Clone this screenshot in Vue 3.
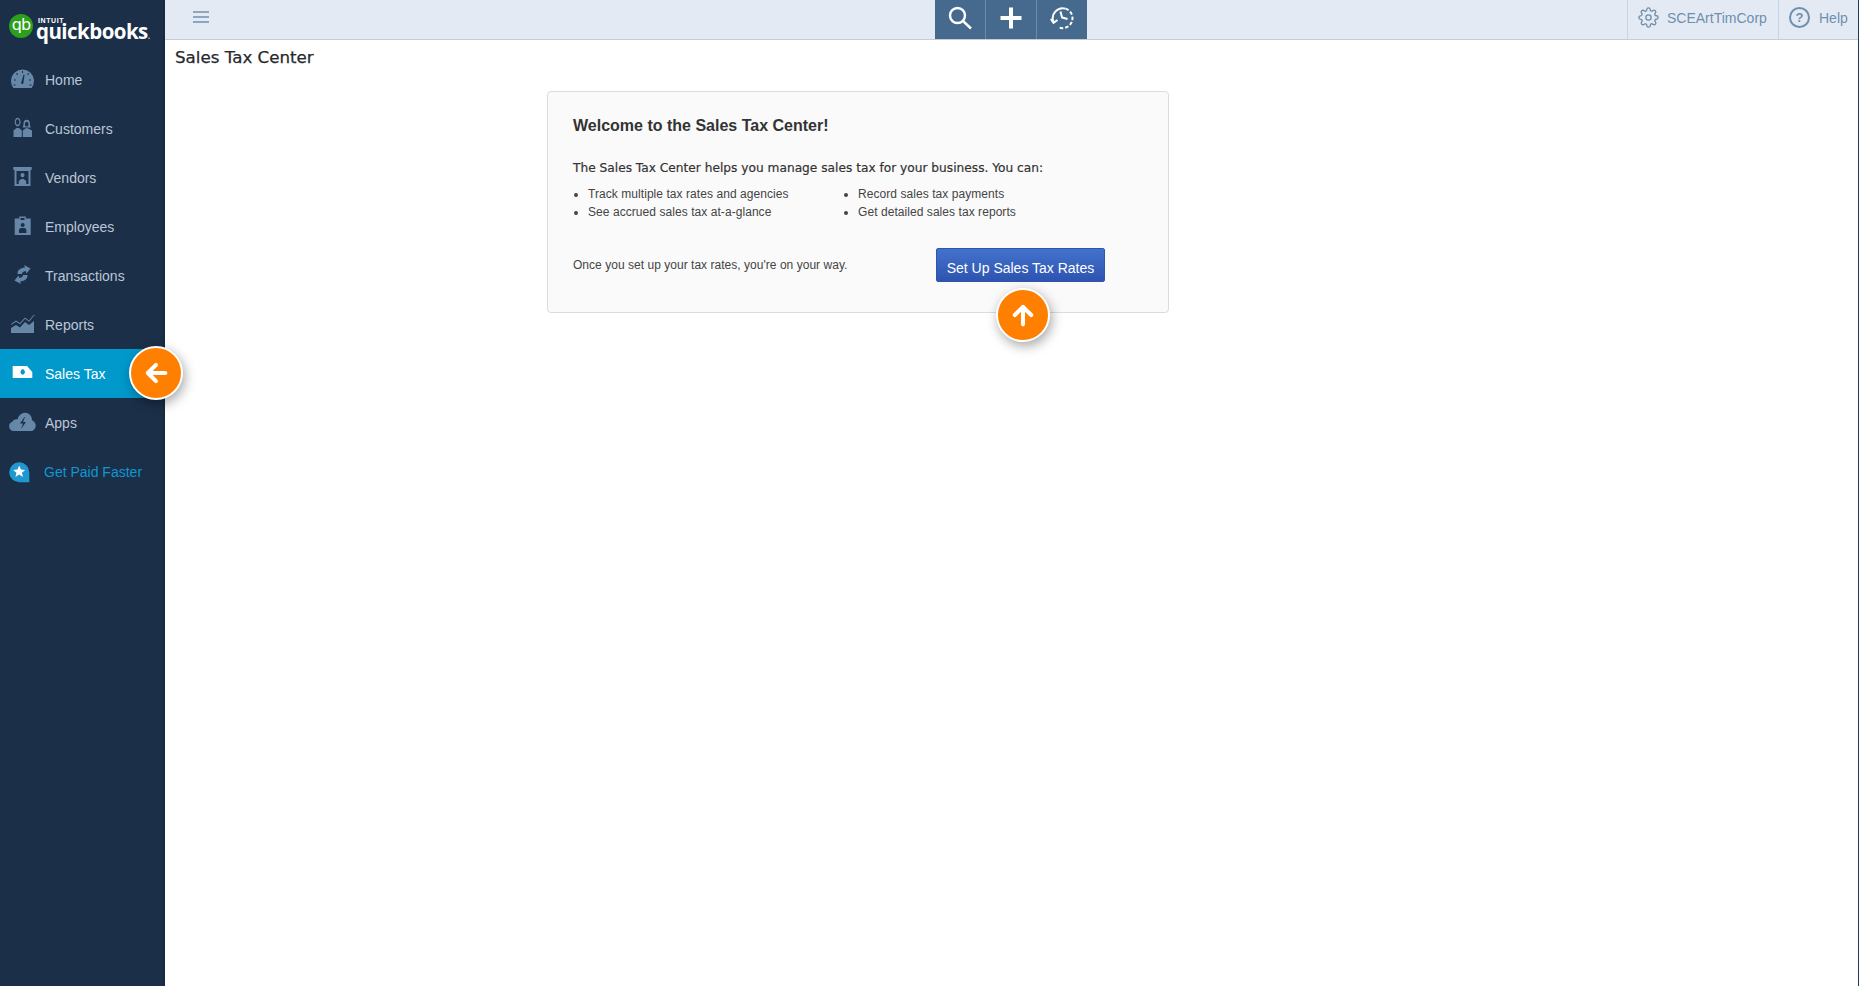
<template>
  <div class="app">
    <aside class="sidebar">
      <div class="logo">
        <span class="logo-mark">qb</span>
        <div class="logo-words">
          <span class="logo-intuit">INTUIT</span>
          <span class="logo-name">quickbooks<i>.</i></span>
        </div>
      </div>
      <nav class="nav">
        <a
          v-for="item in navItems"
          :key="item.label"
          class="nav-item"
          :class="{ active: item.active, promo: item.promo }"
        >
          <svg class="nav-icon" viewBox="0 0 30 24">
            <path :d="item.icon" fill="currentColor" fill-rule="evenodd" />
            <path
              v-if="item.promo"
              d="M11.2 5.6l1.7 4 4.300.3-3.300 2.800 1.100 4.200-3.800-2.300-3.800 2.300 1.100-4.200-3.300-2.800 4.300-.3z"
              fill="#fff"
            />
          </svg>
          <span>{{ item.label }}</span>
          <span v-if="item.active" class="pointer pointer-left">
            <svg viewBox="0 0 24 24" class="pointer-arrow">
              <path d="M20 12H5M12 5l-7 7 7 7" />
            </svg>
          </span>
        </a>
      </nav>
    </aside>

    <div class="main">
      <header class="topbar">
        <div class="top-left">
          <svg class="burger" viewBox="0 0 16 12">
            <path d="M0 1h16M0 6h16M0 11h16" />
          </svg>
        </div>
        <div class="top-actions">
          <button class="action">
            <svg viewBox="0 0 24 24" class="action-icon">
              <circle cx="9.500" cy="9.500" r="7.500" />
              <path d="M15 15L23 22.500" />
            </svg>
          </button>
          <button class="action">
            <svg viewBox="0 0 24 24" class="action-icon thick">
              <path d="M12 1.500v21M1.500 12h21" />
            </svg>
          </button>
          <button class="action">
            <svg viewBox="0 0 24 24" class="action-icon thin">
              <path d="M3.300 15.500A10 10 0 0 1 15.500 2.600" />
              <path d="M15.500 2.600A10 10 0 0 1 9.500 21.700" stroke-dasharray="3.500 2" />
              <path d="M0.800 13L3.500 16.800 7.500 14" />
              <path d="M10.500 5.500l1.500 6 5.500 1.500" />
            </svg>
          </button>
        </div>
        <div class="top-right">
          <div class="top-cell company">
            <svg viewBox="0 0 24 24" class="gear">
              <circle cx="12" cy="12" r="3" />
              <path d="M19.4 15a1.65 1.65 0 0 0 .33 1.82l.06.06a2 2 0 0 1 0 2.83 2 2 0 0 1-2.83 0l-.06-.06a1.65 1.65 0 0 0-1.82-.33 1.65 1.65 0 0 0-1 1.51V21a2 2 0 0 1-2 2 2 2 0 0 1-2-2v-.09A1.65 1.65 0 0 0 9 19.4a1.65 1.65 0 0 0-1.82.33l-.06.06a2 2 0 0 1-2.83 0 2 2 0 0 1 0-2.83l.06-.06a1.65 1.65 0 0 0 .33-1.82 1.65 1.65 0 0 0-1.51-1H3a2 2 0 0 1-2-2 2 2 0 0 1 2-2h.09A1.65 1.65 0 0 0 4.6 9a1.65 1.65 0 0 0-.33-1.82l-.06-.06a2 2 0 0 1 0-2.83 2 2 0 0 1 2.83 0l.06.06a1.65 1.65 0 0 0 1.82.33H9a1.65 1.65 0 0 0 1-1.51V3a2 2 0 0 1 2-2 2 2 0 0 1 2 2v.09a1.65 1.65 0 0 0 1 1.51 1.65 1.65 0 0 0 1.82-.33l.06-.06a2 2 0 0 1 2.83 0 2 2 0 0 1 0 2.83l-.06.06a1.65 1.65 0 0 0-.33 1.82V9a1.65 1.65 0 0 0 1.51 1H21a2 2 0 0 1 2 2 2 2 0 0 1-2 2h-.09a1.65 1.65 0 0 0-1.51 1z" />
            </svg>
            <span>SCEArtTimCorp</span>
          </div>
          <div class="top-cell help">
            <span class="help-icon">?</span>
            <span>Help</span>
          </div>
        </div>
      </header>

      <div class="content">
        <h1 class="page-title">Sales Tax Center</h1>
        <section class="welcome">
          <h2>Welcome to the Sales Tax Center!</h2>
          <p class="intro">The Sales Tax Center helps you manage sales tax for your business. You can:</p>
          <div class="lists">
            <ul v-for="(list, i) in features" :key="i">
              <li v-for="text in list" :key="text">{{ text }}</li>
            </ul>
          </div>
          <div class="welcome-foot">
            <p>Once you set up your tax rates, you're on your way.</p>
            <div class="cta">
              <button class="primary">Set Up Sales Tax Rates</button>
              <span class="pointer pointer-up">
                <svg viewBox="0 0 24 24" class="pointer-arrow">
                  <path d="M12 20V5M5 12l7-7 7 7" />
                </svg>
              </span>
            </div>
          </div>
        </section>
      </div>
    </div>
  </div>
</template>

<script setup>
const navItems = [
  {
    label: 'Home',
    icon: 'M5.4 20A11.5 11.5 0 1 1 23.6 20Z M13 15.5L15.6 6.5l1 .3L15.2 16Z M14 3h1v2h-1Z M6 11.5h2v1H6Z M21 11.5h2v1h-2Z M8 5.6l.9-.7 1.2 1.6-.8.7Z M20.2 4.9l.9.7-1.2 1.6-.8-.7Z M5.5 16.5h2v1h-2Z M21.5 16.5h2v1h-2Z'
  },
  {
    label: 'Customers',
    icon: 'M9.6 0.8a3 4.200 0 1 0 .01 0Z M9.6 2.200a1.800 2.800 0 1 1-.01 0Z M5.5 20v-6.500l3-2.500h2.500l2.800 2.500V20Z M18.7 2.800a3.200 3.800 0 0 0-3.200 3.800c0 1.700-.4 3.200-1 4h8.400c-.6-.8-1-2.300-1-4a3.200 3.800 0 0 0-3.200-3.800Z M18.700 4.800a1.800 2.400 0 1 1-.01 0Z M14.800 20v-6.500l3-2.200h1.800l4.400 2.200V20Z'
  },
  {
    label: 'Vendors',
    icon: 'M5.3 1h18.4v3h-1.2v16h-16V4H5.3Z M8.5 5v13h12V5Z M14.5 7a2 2.2 0 1 1-.01 0Z M10.8 18v-3l2.4-2h2.6l2.4 2v3Z'
  },
  {
    label: 'Employees',
    icon: 'M6.7 3.5h4.5v-2h6.6v2h4.9V20h-16Z M12.5 3v2h4V3Z M14.7 8a2 2 0 1 1-.01 0Z M11 18v-3.5l1.5-1.5h4.4l1.5 1.5V18Z'
  },
  {
    label: 'Transactions',
    icon: 'M9.5 10C9.5 6 12 4 17 3.5L16 1l6.500 3.500-4 5-.8-2.500C15 7.500 14 8.500 14 10Z M19.500 11C19.500 15 17 17 12 17.500L13 20 6.500 16.500l4-5 .8 2.500C14 13.500 15 12.500 15 11Z'
  },
  {
    label: 'Reports',
    icon: 'M3 20v-5l5-3 4 2.500 5-5.500 4 3 5-4V20Z M3 11l5-3.500 4 2.500 5-5.500 4 3 5-6 .6.6-5.500 6.600-4-3-5 5.500-4-2.500-5 3.400Z'
  },
  {
    label: 'Sales Tax',
    active: true,
    icon: 'M4.7 4H19l5.300 6v6H4.700Z M14.700 7.300a2.200 2.700 0 1 0 .01 0Z'
  },
  {
    label: 'Apps',
    icon: 'M6 20a4.700 4.700 0 0 1-1.500-9.200C5.500 8.500 8 8 9.500 8.500 10.500 4 14 1.700 17 1.700c4 0 7 3 7 7.500 2.500 1 3.700 3 3.700 5.500 0 3-2.300 5.300-5 5.300Z M16.500 6L12 12.500h3L13 18l5-7h-3l2-5Z'
  },
  {
    label: 'Get Paid Faster',
    promo: true,
    icon: 'M11.200 2.300a10 10 0 0 0 0 20h10.100v-10a10 10 0 0 0-10.100-10Z'
  }
]

const features = [
  ['Track multiple tax rates and agencies', 'See accrued sales tax at-a-glance'],
  ['Record sales tax payments', 'Get detailed sales tax reports']
]
</script>

<style>
html,
body {
  margin: 0;
  background: #fff;
}
</style>

<style scoped>
.app {
  display: flex;
  height: 986px;
  overflow: hidden;
  font-family: "Liberation Sans", Arial, sans-serif;
}

.sidebar {
  position: relative;
  z-index: 2;
  flex: 0 0 165px;
  background: #1b2f48;
  box-shadow: inset -2px 0 0 #182a41;
}

.logo {
  height: 55px;
  box-sizing: border-box;
  padding: 14px 0 0 9px;
  display: flex;
  gap: 3px;
  color: #fff;
}

.logo-mark {
  flex: 0 0 24px;
  height: 24px;
  border-radius: 50%;
  background: #2ca01c;
  font: 400 16px/21px "DejaVu Sans", sans-serif;
  letter-spacing: -1px;
  text-align: center;
}

.logo-words {
  display: flex;
  flex-direction: column;
  margin-top: 3px;
}

.logo-intuit {
  font: 700 7px/7px "Liberation Sans", sans-serif;
  letter-spacing: 0.6px;
  padding-left: 2px;
}

.logo-name {
  margin-top: -2px;
  font: 700 20.5px/18px "Open Sans", sans-serif;
  letter-spacing: -0.55px;
}

.logo-name i {
  font-size: 9px;
  font-style: normal;
  color: #b6c2d2;
}

.nav-item {
  position: relative;
  display: flex;
  align-items: center;
  height: 49px;
  padding-left: 8px;
  gap: 7px;
  color: #bac6d6;
  font-size: 14px;
}

.nav-item .nav-icon {
  flex: 0 0 30px;
  height: 24px;
  color: #6787a8;
}

.nav-item.active {
  background: #0199cb;
  color: #fff;
}

.nav-item.active .nav-icon {
  color: #fff;
}

.nav-item.promo {
  gap: 6px;
  padding-bottom: 1px;
  color: #0f97d2;
}

.nav-item.promo .nav-icon {
  color: #1f97d0;
}

.pointer {
  position: absolute;
  box-sizing: border-box;
  width: 54px;
  height: 54px;
  border: 2px solid #fff;
  border-radius: 50%;
  background: #ff7f00;
  box-shadow: 2px 4px 12px rgba(0, 0, 0, 0.35);
  display: flex;
  align-items: center;
  justify-content: center;
}

.pointer-left {
  left: 129px;
  top: -3px;
}

.pointer-up {
  left: 60px;
  top: 40px;
}

.pointer-arrow {
  width: 28px;
  height: 28px;
  fill: none;
  stroke: #fff;
  stroke-width: 3.5;
  stroke-linecap: round;
  stroke-linejoin: round;
}

.main {
  flex: 1;
  min-width: 0;
  border-right: 1px solid #1b3a5c;
  display: flex;
  flex-direction: column;
}

.topbar {
  height: 40px;
  box-sizing: border-box;
  display: grid;
  grid-template-columns: 1fr auto 1fr;
  background: #e4eaf3;
  border-bottom: 1px solid #c6cdd9;
}

.top-left {
  display: flex;
  align-items: center;
  padding-left: 28px;
  padding-bottom: 5px;
}

.burger {
  width: 16px;
  height: 12px;
  fill: none;
  stroke: #6f8fb0;
  stroke-width: 1.5;
}

.top-actions {
  display: flex;
  margin-left: -1px;
}

.action {
  width: 51px;
  padding: 0 0 4px;
  border: 0;
  border-right: 1px solid #6c8aa8;
  background: #466a8e;
  display: flex;
  align-items: center;
  justify-content: center;
}

.action:last-child {
  width: 50px;
  border-right: 0;
}

.action-icon {
  width: 24px;
  height: 24px;
  fill: none;
  stroke: #fff;
  stroke-width: 2.4;
}

.action-icon.thick {
  stroke-width: 4;
}

.action-icon.thin {
  stroke-width: 2;
}

.top-right {
  display: flex;
  justify-content: flex-end;
  color: #6f8fae;
  font-size: 14px;
}

.top-cell {
  display: flex;
  align-items: center;
  border-left: 1px solid #c5d4e6;
  padding-bottom: 4px;
}

.company {
  width: 151px;
  box-sizing: border-box;
  padding-left: 10px;
  gap: 8px;
}

.gear {
  width: 21px;
  height: 21px;
  fill: none;
  stroke: #6f8fae;
  stroke-width: 1.5;
}

.help {
  width: 80px;
  box-sizing: border-box;
  padding-left: 10px;
  gap: 9px;
}

.help-icon {
  width: 17px;
  height: 17px;
  border: 2px solid #6f8fae;
  border-radius: 50%;
  font: 700 13px/17px "Liberation Sans", sans-serif;
  text-align: center;
}

.content {
  flex: 1;
  padding: 5px 0 0 10px;
}

.page-title {
  margin: 0 0 22px;
  font: 400 16.7px/24px "DejaVu Sans", sans-serif;
  color: #26282c;
  -webkit-text-stroke: 0.25px #26282c;
}

.welcome {
  width: 622px;
  height: 222px;
  box-sizing: border-box;
  margin-left: 372px;
  padding: 24px 25px 0;
  background: #fafafa;
  border: 1px solid #dcdcdc;
  border-radius: 4px;
  color: #444;
}

.welcome h2 {
  margin: 0;
  font: 700 16px/20px "Liberation Sans", sans-serif;
  color: #333;
}

.intro {
  margin: 23px 0 0;
  font: 400 12.2px/18px "DejaVu Sans", sans-serif;
  color: #333;
  -webkit-text-stroke: 0.2px #333;
}

.lists {
  display: flex;
  margin-top: 8px;
}

.lists ul {
  margin: 0;
  padding: 0 0 0 15px;
  width: 255px;
  font-size: 12px;
  line-height: 18px;
  letter-spacing: 0.06px;
}

.welcome-foot {
  display: flex;
  justify-content: space-between;
  align-items: center;
  margin-top: 27px;
  padding-right: 38px;
}

.welcome-foot p {
  margin: 0;
  font-size: 12px;
  letter-spacing: 0.03px;
}

.cta {
  position: relative;
}

.primary {
  width: 169px;
  height: 34px;
  padding: 6px 0 0;
  border: 1px solid #2f56a8;
  border-radius: 2px;
  background: linear-gradient(#4273cc, #2e53b0);
  color: #fff;
  font: 400 14px "Liberation Sans", sans-serif;
}
</style>
